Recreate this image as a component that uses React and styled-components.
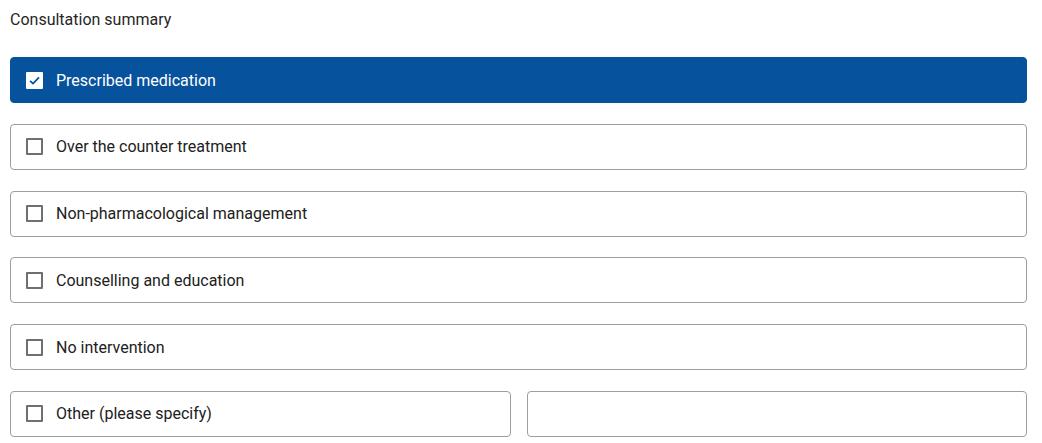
import React from 'react';
import styled, { createGlobalStyle } from 'styled-components';

const GlobalStyle = createGlobalStyle`
  body {
    margin: 0;
    background: #ffffff;
    font-family: Roboto, "Liberation Sans", sans-serif;
    color: #212121;
  }
`;

const Page = styled.div`
  padding: 10px 15px 0 10px;
`;

const Heading = styled.div`
  font-size: 16px;
  line-height: 19px;
  color: #262626;
  margin-bottom: 28px;
`;

const List = styled.div`
  display: flex;
  flex-direction: column;
  gap: 20.8px;
`;

const Row = styled.div`
  display: grid;
  grid-template-columns: ${(p) => (p.split ? '1fr 1fr' : '1fr')};
  gap: 16px;
`;

const Option = styled.label`
  box-sizing: border-box;
  height: 46px;
  display: flex;
  align-items: center;
  gap: 13px;
  padding: 0 15px;
  border-radius: 4px;
  border: 1px solid ${(p) => (p.checked ? '#07529c' : '#9e9e9e')};
  background: ${(p) => (p.checked ? '#07529c' : '#ffffff')};
  color: ${(p) => (p.checked ? '#ffffff' : '#212121')};
  font-size: 16px;
  cursor: pointer;
`;

const Box = styled.span`
  box-sizing: border-box;
  width: 17px;
  height: 17px;
  flex: none;
  display: flex;
  align-items: center;
  justify-content: center;
  border: ${(p) => (p.checked ? 'none' : '2px solid #6f6f6f')};
  background: ${(p) => (p.checked ? '#ffffff' : 'transparent')};
  border-radius: 1px;
`;

const TextInput = styled.input`
  min-width: 0;
  box-sizing: border-box;
  height: 46px;
  border: 1px solid #9e9e9e;
  border-radius: 4px;
  padding: 0 12px;
  font: inherit;
  font-size: 16px;
  outline: none;
`;

const options = [
  { label: 'Prescribed medication', checked: true },
  { label: 'Over the counter treatment' },
  { label: 'Non-pharmacological management' },
  { label: 'Counselling and education' },
  { label: 'No intervention' },
];

function Check({ checked }) {
  return (
    <Box checked={checked}>
      {checked && (
        <svg width="13" height="13" viewBox="0 0 13 13">
          <path d="M2 6.8 L5 9.6 L11 3.4" fill="none" stroke="#07529c" strokeWidth="1.8" />
        </svg>
      )}
    </Box>
  );
}

export default function App() {
  return (
    <>
      <GlobalStyle />
      <Page>
        <Heading>Consultation summary</Heading>
        <List>
          {options.map((o) => (
            <Row key={o.label}>
              <Option checked={o.checked}>
                <Check checked={o.checked} />
                {o.label}
              </Option>
            </Row>
          ))}
          <Row split>
            <Option>
              <Check />
              Other (please specify)
            </Option>
            <TextInput type="text" />
          </Row>
        </List>
      </Page>
    </>
  );
}
